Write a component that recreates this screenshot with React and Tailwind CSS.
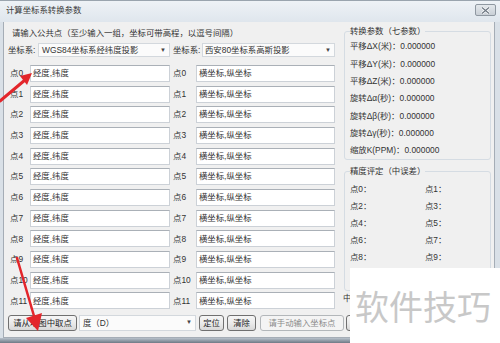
export default function App() {
  const rows = Array.from({ length: 12 }, (_, i) => i);
  const params = [
    "平移ΔX(米)：0.000000",
    "平移ΔY(米)：0.000000",
    "平移ΔZ(米)：0.000000",
    "旋转Δα(秒)：0.000000",
    "旋转Δβ(秒)：0.000000",
    "旋转Δγ(秒)：0.000000",
    "缩放K(PPM)：0.000000",
  ];
  const prec = Array.from({ length: 10 }, (_, i) => `点${i}：`);
  const btn =
    "h-[16px] flex items-center justify-center border border-[#707070] rounded-[3px] bg-gradient-to-b from-[#f6f6f6] via-[#ebebeb] to-[#d8d8d8] text-[#222] whitespace-nowrap";
  const box =
    "h-[17px] bg-white border border-[#ccd1d7] border-t-[#aab0b7] flex items-center pl-[2px] text-[#333] whitespace-nowrap";

  return (
    <div className="relative w-[500px] h-[343px] overflow-hidden bg-[#dde4eb] font-['Liberation_Sans','Noto_Sans_CJK_SC',sans-serif] text-[8.4px] text-[#333] flex flex-col">
      {/* title bar */}
      <div className="h-[22px] flex items-start justify-between bg-gradient-to-b from-[#eef2f6] to-[#dfe6ed] border-t border-[#9aa4ae]">
        <div className="pl-[6px] pt-[2px] leading-[14px] text-[#3a3a3a]">计算坐标系转换参数</div>
        <div className="mt-[3px] mr-[4px] w-[21px] h-[12px] border border-[#8f98a1] rounded-[2px] bg-gradient-to-b from-[#e4e8ec] to-[#c9cfd6] flex items-center justify-center">
          <svg width="9" height="7" viewBox="0 0 9 7">
            <path d="M1 0.5 L8 6.5 M8 0.5 L1 6.5" stroke="#ffffff" strokeWidth="2.6" />
            <path d="M1 0.5 L8 6.5 M8 0.5 L1 6.5" stroke="#6d7782" strokeWidth="1.2" />
          </svg>
        </div>
      </div>

      {/* middle */}
      <div className="h-[316px] flex">
        <div className="w-[3px] bg-[#d9e0e7]" />
        <div className="flex-1 bg-[#f0f0f0] border-x border-b border-[#a5adb6] flex flex-col">
          <div className="flex h-[289.4px]">
            {/* left column */}
            <div className="w-[339px] pl-[4px] flex flex-col">
              <div className="mt-[4px] h-[14px] leading-[14px] pl-[4px] whitespace-nowrap">
                请输入公共点（至少输入一组，坐标可带高程，以逗号间隔）
              </div>
              <div className="mt-[3px] h-[14px] flex items-center whitespace-nowrap">
                <div className="w-[30px] leading-[14px]">坐标系:</div>
                <div className="w-[132px] h-[14px] bg-[#fbfbfb] border border-[#d3d8dd] flex items-center justify-between pl-[3px] pr-[3px]">
                  <span>WGS84坐标系经纬度投影</span>
                  <span className="text-[6px] text-[#444]">▼</span>
                </div>
                <div className="ml-[3px] w-[29px] leading-[14px]">坐标系:</div>
                <div className="w-[133px] h-[14px] bg-[#fbfbfb] border border-[#d3d8dd] flex items-center justify-between pl-[2px] pr-[3px]">
                  <span>西安80坐标系高斯投影</span>
                  <span className="text-[6px] text-[#444]">▼</span>
                </div>
              </div>
              <div className="mt-[6px] flex flex-col">
                {rows.map((i) => (
                  <div key={i} className="h-[20.7px] flex items-center whitespace-nowrap">
                    <div className="w-[22px] pl-[2px]">点{i}</div>
                    <div className={`w-[140px] ${box}`}>经度,纬度</div>
                    <div className="w-[26px] pl-[3px]">点{i}</div>
                    <div className={`w-[139px] ${box}`}>横坐标,纵坐标</div>
                  </div>
                ))}
              </div>
            </div>

            {/* right column */}
            <div className="w-[151px] flex flex-col">
              <fieldset className="mt-[3px] ml-[1px] w-[147px] border border-[#d5dce3] rounded-[3px] px-[5px] pt-[1px]">
                <legend className="leading-[12px] px-0">转换参数（七参数）</legend>
                {params.map((p) => (
                  <div key={p} className="h-[17.3px] flex items-center whitespace-nowrap">
                    {p}
                  </div>
                ))}
              </fieldset>
              <fieldset className="mt-[5px] ml-[1px] w-[147px] h-[126px] border border-[#d5dce3] rounded-[3px] px-[5px] pt-[3.5px]">
                <legend className="leading-[12px] px-0">精度评定（中误差）</legend>
                <div className="grid grid-cols-[75px_1fr]">
                  {prec.map((p) => (
                    <div key={p} className="h-[17px] flex items-center">
                      {p}
                    </div>
                  ))}
                </div>
              </fieldset>
              <div className="h-[14px] leading-[14px]">中</div>
            </div>
          </div>

          {/* bottom row */}
          <div className="mt-[3.6px] pl-[4px] flex items-center h-[16px]">
            <div className={`w-[69px] ${btn}`}>请从地图中取点</div>
            <div className="ml-[2px] w-[117px] h-[16px] bg-[#fbfbfb] border border-[#d3d8dd] flex items-center justify-between pl-[3px] pr-[3px]">
              <span>度（D）</span>
              <span className="text-[6px] text-[#444]">▼</span>
            </div>
            <div className={`ml-[3px] w-[25px] ${btn}`}>定位</div>
            <div className={`ml-[3px] w-[29px] ${btn}`}>清除</div>
            <div className="ml-[4px] w-[84px] h-[16px] flex items-center justify-center border border-[#b3b7ba] rounded-[3px] bg-[#f4f4f4] text-[#8a8a8a] whitespace-nowrap">
              请手动输入坐标点
            </div>
            <div className={`ml-[2px] w-[60px] ${btn}`} />
          </div>
        </div>
        <div className="w-[5px] bg-[#d9e0e7]" />
      </div>
      <div className="h-[5px] bg-gradient-to-b from-[#b9c2cc] to-[#6f7a86]" />

      {/* red arrows overlay */}
      <svg className="absolute left-0 top-0 pointer-events-none" width="500" height="343">
        <line x1="0" y1="101" x2="25" y2="80" stroke="#e3262b" strokeWidth="3" strokeLinecap="round" />
        <polygon points="32,73 27,85 20,76" fill="#e3262b" />
        <line x1="17" y1="258" x2="34" y2="316" stroke="#e3262b" strokeWidth="2.5" strokeLinecap="round" />
        <polygon points="38,331 42,313 26,318" fill="#e3262b" />
      </svg>

      {/* watermark */}
      <div className="absolute left-[350px] top-[268px] w-[150px] h-[75px] bg-white flex items-center pl-[5px]">
        <span className="font-['Noto_Sans_CJK_SC',sans-serif] text-[34px] leading-[40px] text-[#c8c8c8] whitespace-nowrap">
          软件技巧
        </span>
      </div>
    </div>
  );
}
